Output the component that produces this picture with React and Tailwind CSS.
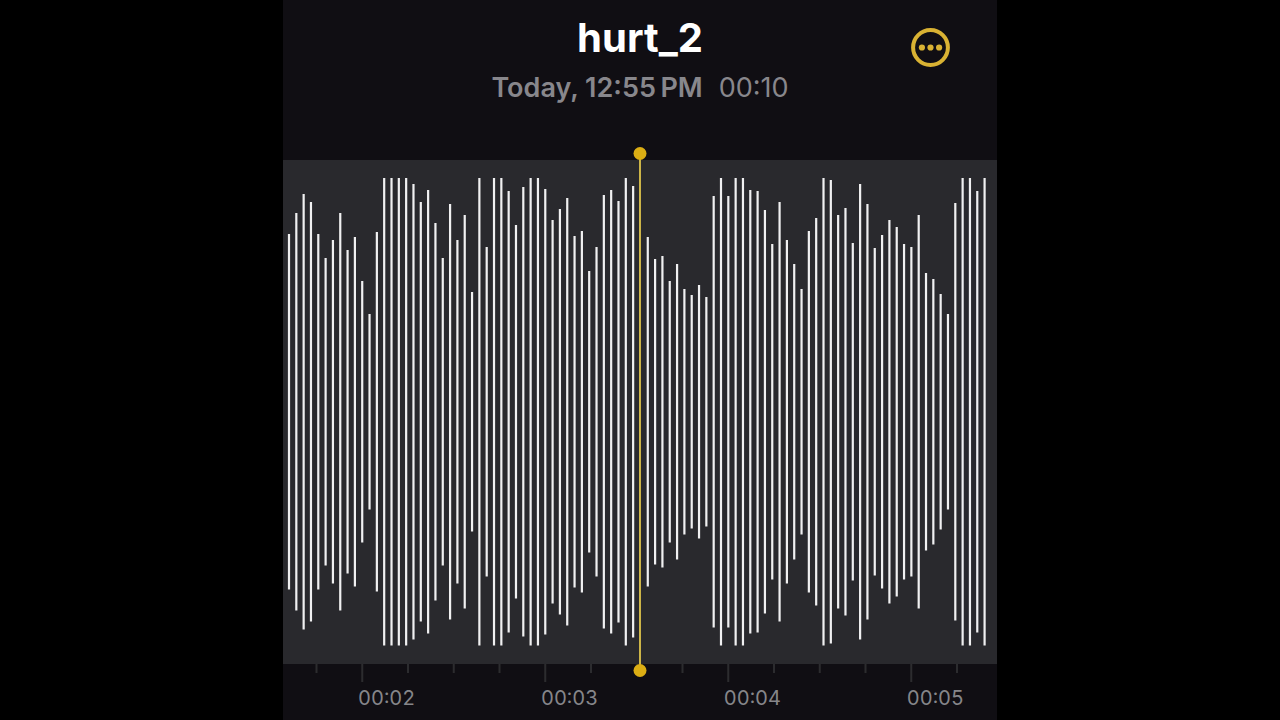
import clsx from 'clsx';

// Top edge of each bar inside the 504 unit tall track; bars mirror around its middle
const BAR_TOPS = [
  74, 53, 34, 42, 74, 98, 80, 53, 90, 77, 121, 154, 72, 18, 18, 18,
  18, 24, 42, 30, 63, 98, 44, 80, 55, 132, 18, 87, 18, 18, 31, 65,
  27, 18, 18, 29, 60, 49, 38, 76, 71, 111, 87, 35, 30, 41, 18, 26,
  null, 77, 99, 96, 121, 104, 129, 135, 125, 137, 36, 18, 36, 18, 18, 30,
  31, 50, 84, 42, 80, 104, 129, 71, 58, 18, 20, 55, 48, 83, 24, 44,
  88, 75, 60, 67, 84, 87, 55, 113, 119, 134, 154, 43, 18, 18, 31, 18,
];

const BAR_STEP = 7.322;
const TICK_STEP = 45.75;
const TIMES = ['00:02', '00:03', '00:04', '00:05'];

const MoreIcon = () => (
  <svg viewBox="0 0 40 40" className="w-10 h-10" aria-hidden="true">
    <circle cx="19.5" cy="19.5" r="17.4" fill="none" stroke="currentColor" strokeWidth="4" />
    <circle cx="10.9" cy="19.5" r="3.1" fill="currentColor" />
    <circle cx="19.5" cy="19.5" r="3.1" fill="currentColor" />
    <circle cx="28.1" cy="19.5" r="3.1" fill="currentColor" />
  </svg>
);

const Waveform = () => (
  <svg viewBox="0 0 714 504" preserveAspectRatio="none" className="block w-full h-[70vh] bg-[#29292d]">
    {BAR_TOPS.map((top, i) => (
      top !== null && (
        <rect key={i} x={4.9 + i * BAR_STEP} y={top} width="2.2" height={503.5 - top * 2} fill="#f0f0f1" />
      )
    ))}
  </svg>
);

const Ruler = () => (
  <div className="h-14">
    <svg viewBox="0 0 714 18" preserveAspectRatio="none" className="block w-full h-[18px]">
      {Array.from({ length: 15 }, (_, i) => (
        <rect key={i} x={32.5 + i * TICK_STEP} width="2" height={i % 4 === 1 ? 18 : 9} fill="#2c2c2f" />
      ))}
    </svg>
    <div className="flex justify-between pl-[75px] pr-[33px] text-xl leading-8 text-[#86868a] tabular-nums">
      {TIMES.map((time) => <span key={time}>{time}</span>)}
    </div>
  </div>
);

const PlayheadDot = ({ className }) => (
  <span className={clsx('absolute left-1/2 -translate-x-1/2 w-[13px] h-[13px] rounded-full bg-[#dcae14]', className)} />
);

const App = () => {
  return (
    <div className="min-h-screen bg-black font-['Inter','Liberation_Sans',sans-serif]">
      <main className="w-full max-w-[714px] min-h-screen mx-auto bg-[#100e13] overflow-hidden">
        <header className="relative h-40 pt-4 text-center">
          <h1 className="text-[40px] leading-[44px] font-bold text-white">hurt_2</h1>
          <p className="flex justify-center gap-4 mt-2 text-[27px] leading-10 text-[#88878c]">
            <span className="font-semibold">Today, 12:55{'\u2009'}PM</span>
            <span>00:10</span>
          </p>
          <button type="button" aria-label="More options" className="absolute right-[46px] top-7 text-[#d9b233]">
            <MoreIcon />
          </button>
        </header>

        <section className="relative" aria-label="Waveform">
          <Waveform />
          {/* Playhead */}
          <div className="absolute left-1/2 -translate-x-1/2 -top-1 -bottom-1 w-0.5 bg-[#cdb548]">
            <PlayheadDot className="-top-[9px]" />
            <PlayheadDot className="-bottom-[9px]" />
          </div>
        </section>

        <Ruler />
      </main>
    </div>
  );
};

export default App;
